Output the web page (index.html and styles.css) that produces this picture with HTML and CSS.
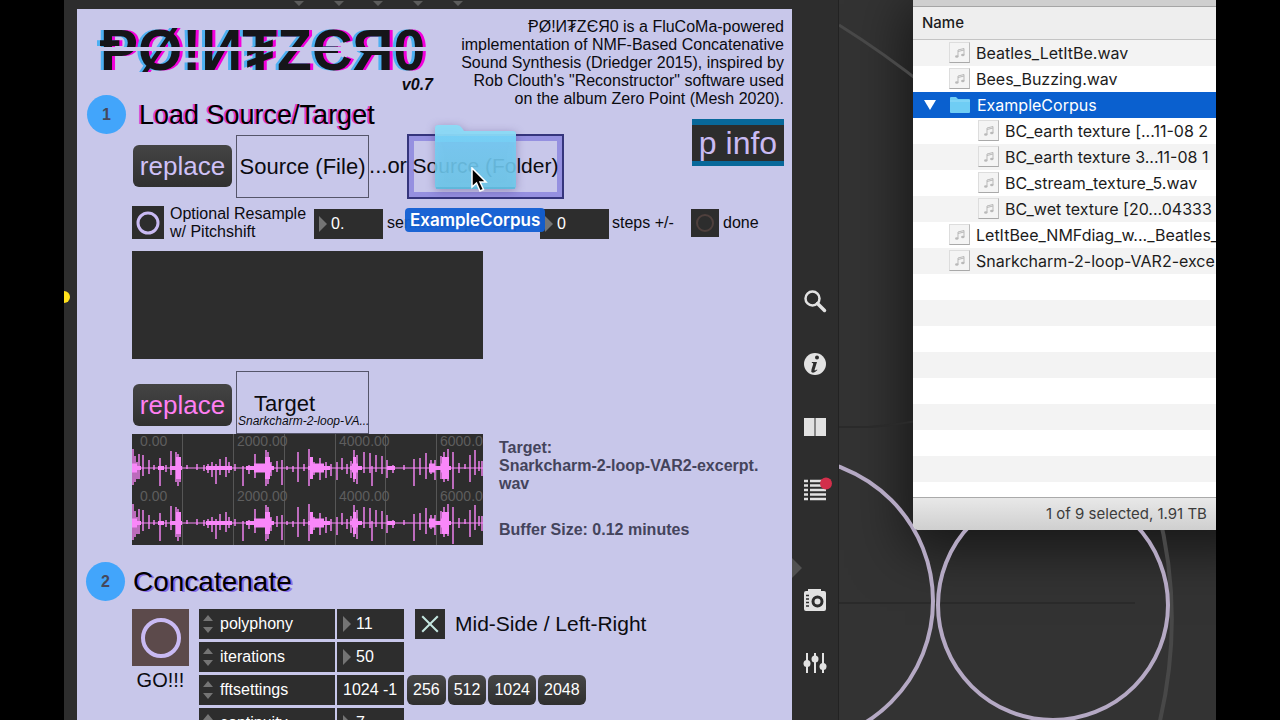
FILE: index.html
```html
<!DOCTYPE html>
<html lang="en">
<head>
<meta charset="utf-8">
<title>Point Zero</title>
<link rel="stylesheet" href="styles.css">
</head>
<body>
<div class="stage">
  <svg class="marks" width="400" height="9" viewBox="0 0 400 9" aria-hidden="true"><path d="M230 1h10l-5 5zM270 1h10l-5 5zM309 1h10l-5 5zM349 1h10l-5 5zM389 1h10l-5 5z" fill="#5c5c5c"/></svg>
  <aside class="gutter"><span class="gutter-dot"></span></aside>

  <main class="patch">
    <header class="intro">
      <div class="brand">
        <h1 class="logo">ⱣØ!И₮ZЄЯ0</h1>
        <p class="version">v0.7</p>
      </div>
      <p class="about">ⱣØ!И₮ZЄЯ0 is a FluCoMa-powered<br>implementation of NMF-Based Concatenative<br>Sound Synthesis (Driedger 2015), inspired by<br>Rob Clouth's "Reconstructor" software used<br>on the album Zero Point (Mesh 2020).</p>
    </header>

    <section class="load">
      <div class="load-main">
        <div class="heading heading-load"><span class="step">1</span><h2 class="title title-pink">Load Source/Target</h2></div>
        <div class="slots">
          <button class="replace">replace</button>
          <div class="drop">Source (File)</div>
          <span class="or">...or</span>
          <div class="drop drop-active">Source (Folder)
            <div class="drag">
              <svg class="drag-folder" width="86" height="72" viewBox="0 0 86 72" aria-hidden="true">
                <defs><linearGradient id="fold" x1="0" y1="0" x2="0" y2="1"><stop offset="0" stop-color="#74cdf5"/><stop offset="1" stop-color="#6ccaea"/></linearGradient></defs>
                <path d="M2 6q0-3 3-3h19q3 0 5 3l2 3h49q3 0 3 3v8H2z" fill="#8bdbf7" opacity=".95"/>
                <path d="M2 14h81v50q0 3-3 3H5q-3 0-3-3z" fill="url(#fold)" opacity=".88"/>
                <path d="M3 66h79" stroke="#4eabd0" stroke-width="1"/>
              </svg>
              <span class="drag-label">ExampleCorpus</span>
              <svg class="cursor" width="18" height="26" viewBox="0 0 18 26" aria-hidden="true"><path d="M1 1v19l4.500-4 3.500 8 3.500-1.500-3.500-7.500h6z" fill="#000" stroke="#fff" stroke-width="1.500"/></svg>
            </div>
          </div>
        </div>
      </div>
      <button class="info">p info</button>
    </section>

    <section class="resample">
      <button class="bang bang-m" aria-label="Resample"><svg width="26" height="26" viewBox="0 0 26 26"><circle cx="13" cy="13" r="10" fill="none" stroke="#c9baf3" stroke-width="3"/></svg></button>
      <span class="resample-label">Optional Resample<br>w/ Pitchshift</span>
      <label class="num"><svg width="8" height="16" viewBox="0 0 8 16"><path d="M0 0l8 8-8 8z" fill="#747474"/></svg><input class="num-in" aria-label="semitones" value="0."></label>
      <span class="semi">semitones per step</span>
      <label class="num num-steps"><svg width="8" height="16" viewBox="0 0 8 16"><path d="M0 0l8 8-8 8z" fill="#747474"/></svg><input class="num-in" aria-label="steps" value="0"></label>
      <span class="steps">steps +/-</span>
      <button class="bang bang-s" aria-label="done"><svg width="22" height="22" viewBox="0 0 22 22"><circle cx="11" cy="11" r="8" fill="none" stroke="#4f403d" stroke-width="2"/></svg></button>
      <span class="done">done</span>
    </section>

    <div class="buffer"></div>

    <section class="slots slots-target">
      <button class="replace replace-pink">replace</button>
      <div class="drop drop-target"><span class="target-name">Target</span><em class="target-file">Snarkcharm-2-loop-VA...</em></div>
    </section>

    <section class="target">
      <svg class="wave" width="351" height="111" viewBox="0 0 351 111" role="img" aria-label="Waveform">
        <rect width="351" height="111" fill="#2d2d2d"/>
        <path d="M50.500 0v111M101.500 0v111M152.500 0v111M203.500 0v111M253.500 0v111M304.500 0v111" stroke="#565656"/>
        <g class="ruler">
          <text x="8" y="12">0.00</text><text x="105" y="12">2000.00</text><text x="207" y="12">4000.00</text><text x="308" y="12">6000.00</text>
          <text x="8" y="67">0.00</text><text x="105" y="67">2000.00</text><text x="207" y="67">4000.00</text><text x="308" y="67">6000.00</text>
        </g>
        <g id="channel" fill="none" stroke="#f987f9">
          <path d="M0 34H351" stroke-width="1"/>
          <path d="M1 15v36M3 22v26M5 28v17M7 20v25M11 21v21M17 26v14M22 31v5M28 24v28M34 31v7M39 17v24M44 18v30M46 20v32M48 24v24M55 31v4M65 30v6M72 31v6M76 30v9M80 28v15M84 30v20M88 25v16M94 23v20M97 28v11M103 30v7M111 32v20M117 31v9M123 20v24M130 30v8M134 16v36M136 18v32M139 28v14M145 27v11M150 26v25M155 32v4M161 32v6M166 18v30M172 30v7M177 15v37M179 26v13M182 28v13M188 24v22M194 28v16M199 30v12M205 28v18M210 24v12M215 30v10M219 27v17M222 16v32M225 21v29M232 18v21M238 19v20M240 32v20M244 21v17M250 22v18M255 26v18M261 31v8M272 31v5M282 25v27M288 24v17M294 19v26M299 26v14M303 26v20M309 22v23M312 18v30M316 15v32M321 18v37M327 29v10M333 30v5M338 21v27M343 16v25M347 27v10M350 27v15" stroke-width="1.400"/>
          <path d="M0 34h9M26 34h6M38 34h12M74 34h26M114 34h28M176 34h22M218 34h12M255 34h8M297 34h22" stroke-width="4"/>
          <path d="M122 34h16M178 34h14M297 34h6M0 34h5M44 34h5M131 34h8M220 34h6M309 34h8" stroke-width="9"/>
          <path d="M44 34h5M133 34h5M178 34h3M221 34h3M310 34h7" stroke-width="22"/>
        </g>
        <use href="#channel" y="55"/>
      </svg>
      <div class="meta"><p class="meta-name">Target:<br>Snarkcharm-2-loop-VAR2-excerpt.<br>wav</p><p class="meta-size">Buffer Size: 0.12 minutes</p></div>
    </section>

    <div class="heading heading-concat"><span class="step">2</span><h2 class="title title-violet">Concatenate</h2></div>

    <section class="concat">
      <div class="go">
        <button class="bang bang-l" aria-label="Go"><svg width="44" height="44" viewBox="0 0 44 44"><circle cx="22" cy="22" r="18" fill="none" stroke="#c9baf3" stroke-width="4"/></svg></button>
        <span class="go-label">GO!!!</span>
      </div>
      <div class="params">
        <label class="param" for="p1"><svg width="10" height="18" viewBox="0 0 10 18"><path d="M0 6l5-6 5 6zM0 12h10l-5 6z" fill="#747474"/></svg>polyphony</label>
        <span class="value"><svg width="8" height="16" viewBox="0 0 8 16"><path d="M0 0l8 8-8 8z" fill="#747474"/></svg><input class="value-in" id="p1" value="11"></span>
        <label class="param" for="p2"><svg width="10" height="18" viewBox="0 0 10 18"><path d="M0 6l5-6 5 6zM0 12h10l-5 6z" fill="#747474"/></svg>iterations</label>
        <span class="value"><svg width="8" height="16" viewBox="0 0 8 16"><path d="M0 0l8 8-8 8z" fill="#747474"/></svg><input class="value-in" id="p2" value="50"></span>
        <label class="param" for="p3"><svg width="10" height="18" viewBox="0 0 10 18"><path d="M0 6l5-6 5 6zM0 12h10l-5 6z" fill="#747474"/></svg>fftsettings</label>
        <span class="value"><input class="value-in" id="p3" value="1024 -1"></span>
        <label class="param" for="p4"><svg width="10" height="18" viewBox="0 0 10 18"><path d="M0 6l5-6 5 6zM0 12h10l-5 6z" fill="#747474"/></svg>continuity</label>
        <span class="value"><svg width="8" height="16" viewBox="0 0 8 16"><path d="M0 0l8 8-8 8z" fill="#747474"/></svg><input class="value-in" id="p4" value="7"></span>
      </div>
      <div class="options">
        <label class="mid"><input class="tick" type="checkbox" checked>Mid-Side / Left-Right</label>
        <div class="sizes"><button class="size">256</button><button class="size">512</button><button class="size">1024</button><button class="size">2048</button></div>
      </div>
    </section>
  </main>

  <nav class="tools">
    <button class="tool" aria-label="Search"><svg width="24" height="24" viewBox="0 0 24 24"><circle cx="9.500" cy="9.500" r="7" fill="none" stroke="#e2e2e2" stroke-width="2.500"/><path d="M14.500 14.500l7 7" stroke="#e2e2e2" stroke-width="3.500" stroke-linecap="round"/></svg></button>
    <button class="tool" aria-label="Info"><svg width="24" height="24" viewBox="0 0 24 24"><circle cx="12" cy="12" r="11" fill="#e2e2e2"/><circle cx="14" cy="5.500" r="2" fill="#2d2d2d"/><path d="M9 10h5l-2.500 8q0 1 2.500-.5l.4.600q-3 3-5 2.500-1.700-.5-.9-3l1.700-5.500q.3-1.300-1.500-1z" fill="#2d2d2d"/></svg></button>
    <button class="tool" aria-label="Reference"><svg width="24" height="24" viewBox="0 0 24 24"><path d="M1 3h10.500v18H1zM12.500 3H23v18H12.500z" fill="#e2e2e2"/></svg></button>
    <button class="tool" aria-label="Console"><svg width="34" height="32" viewBox="-1 0 34 32"><path d="M5 7h4M11 7h16M5 11.500h4M11 11.500h16M5 16h4M11 16h16M5 20.500h4M11 20.500h16M5 25h4M11 25h16" stroke="#e2e2e2" stroke-width="2.500"/><circle cx="27" cy="9.500" r="6" fill="#d32f4b"/></svg></button>
    <button class="tool tool-camera" aria-label="Snapshots"><svg width="24" height="24" viewBox="0 0 24 24"><path d="M5 3V1h13v2h3q2 0 2 2v16q0 2-2 2H3q-2 0-2-2V5q0-2 2-2z" fill="#e2e2e2"/><path d="M3 7.500h3M3 11h3M3 14.500h3M3 18h3" stroke="#2d2d2d" stroke-width="1.500"/><circle cx="14.500" cy="13.500" r="4.500" fill="none" stroke="#2d2d2d" stroke-width="3"/></svg></button>
    <button class="tool" aria-label="Mixer"><svg width="24" height="24" viewBox="0 0 24 24"><path d="M4 2v20M12 2v20M20 2v20" stroke="#e2e2e2" stroke-width="2"/><circle cx="4" cy="12.500" r="3.500" fill="#e2e2e2"/><circle cx="12" cy="8" r="3.500" fill="#e2e2e2"/><circle cx="20" cy="15.500" r="3.500" fill="#e2e2e2"/></svg></button>
    <span class="notch"></span>
  </nav>

  <div class="canvas">
    <svg class="orbits" width="377" height="720" viewBox="0 0 377 720" aria-hidden="true">
      <path d="M0 427h30q30-2 80-12M0 603h296" fill="none" stroke="#2a2a2a" stroke-width="2"/>
      <path d="M310 480q40 120 10 245" fill="none" stroke="#484848" stroke-width="4"/>
      <path d="M0 25q45 28 90 64" fill="none" stroke="#484848" stroke-width="3"/>
      <circle cx="-49" cy="601" r="143" fill="none" stroke="#b5a9c4" stroke-width="4"/>
      <circle cx="214" cy="605" r="115" fill="none" stroke="#b5a9c4" stroke-width="4"/>
    </svg>
    <section class="finder">
      <div class="finder-bar"></div>
      <table class="files">
        <thead><tr><th>Name</th></tr></thead>
        <tbody>
          <tr><td><span class="file"><i class="doc"></i>Beatles_LetItBe.wav</span></td></tr>
          <tr><td><span class="file"><i class="doc"></i>Bees_Buzzing.wav</span></td></tr>
          <tr class="picked"><td><span class="file file-open"><svg width="14" height="12" viewBox="0 0 14 12"><path d="M1 1h12L7 11z" fill="#fff"/></svg><svg width="22" height="18" viewBox="0 0 22 18"><path d="M1 2q0-1 1-1h5l2 2h11q1 0 1 1v12q0 1-1 1H2q-1 0-1-1z" fill="#6fcdf4"/><path d="M1 5h20" stroke="#93dcf8"/></svg>ExampleCorpus</span></td></tr>
          <tr><td><span class="file file-in"><i class="doc"></i>BC_earth texture [...11-08 2</span></td></tr>
          <tr><td><span class="file file-in"><i class="doc"></i>BC_earth texture 3...11-08 1</span></td></tr>
          <tr><td><span class="file file-in"><i class="doc"></i>BC_stream_texture_5.wav</span></td></tr>
          <tr><td><span class="file file-in"><i class="doc"></i>BC_wet texture [20...04333</span></td></tr>
          <tr><td><span class="file"><i class="doc"></i>LetItBee_NMFdiag_w..._Beatles_</span></td></tr>
          <tr><td><span class="file"><i class="doc"></i>Snarkcharm-2-loop-VAR2-exce</span></td></tr>
        </tbody>
      </table>
      <div class="blank"></div>
      <footer class="status">1 of 9 selected, 1.91 TB</footer>
    </section>
  </div>
</div>
<script src="icons.js"></script>
</body>
</html>
```
FILE: icons.js
```js
// Puts the music-note glyph into every audio document icon.
document.querySelectorAll('.doc').forEach(function (el) {
  el.innerHTML = '<svg width="12" height="12" viewBox="0 0 12 12"><path d="M4 9.500V3l6-1.500V8M4 4.500L10 3" fill="none" stroke="#b9b9b9"/><ellipse cx="2.800" cy="9.500" rx="1.700" ry="1.300" fill="#b9b9b9"/><ellipse cx="8.800" cy="8" rx="1.700" ry="1.300" fill="#b9b9b9"/></svg>';
});
```
FILE: styles.css
```css
* { box-sizing: border-box; }
body { margin: 0; background: #000; font-family: "Liberation Sans", "DejaVu Sans", sans-serif; font-size: 16px; line-height: 18px; color: #0b0b10; }
h1, h2, p { margin: 0; }
button { font: inherit; border: 0; padding: 0; }
input { font: inherit; border: 0; padding: 0; background: none; min-width: 0; }
svg { display: block; flex: none; }

.stage { position: relative; display: grid; grid-template-columns: 13px minmax(0, 715px) 47px minmax(0, 1fr); height: 100vh; margin: 0 64px; background: #2d2d2d; overflow: hidden; }
.marks { position: absolute; left: 0; top: 0; }
.gutter { position: relative; }
.gutter-dot { position: absolute; left: -6px; top: 291px; width: 12px; height: 12px; border-radius: 50%; background: #ffe11c; }

.patch { margin-top: 9px; padding: 0 8px 0 55px; background: #c8c7ea; display: flex; flex-direction: column; min-height: 0; }
.patch > * { flex: none; }
.intro { display: flex; justify-content: space-between; height: 110px; margin-left: -34px; padding-top: 9px; }
.brand { position: relative; width: 335px; flex: none; }
.logo { height: 58px; padding-left: 2px; font-size: 57px; line-height: 65px; color: #151519; white-space: nowrap; text-shadow: -3px 0 #4db0f2, 3px 0 #f200dc; }
.brand::after { content: ""; position: absolute; left: 0; right: 0; top: 29px; height: 4px; background: #c8c7ea; }
.version { text-align: right; font-weight: bold; font-style: italic; }
.about { text-align: right; white-space: nowrap; }

.load { display: flex; justify-content: space-between; align-items: flex-start; height: 80px; }
.load-main { margin-top: -24px; }
.heading { display: flex; align-items: center; margin-left: -45px; height: 39px; }
.heading-load { gap: 13px; }
.heading-concat { gap: 8px; margin-top: 17px; margin-left: -46px; }
.step { width: 39px; height: 39px; border-radius: 50%; background: #42a5fb; color: #45485c; font-weight: bold; line-height: 39px; text-align: center; flex: none; }
.title { font-weight: normal; font-size: 27px; line-height: 32px; color: #000; }
.title-pink { text-shadow: -2px 0 #e03bd8; }
.title-violet { text-shadow: 2px 1px #8c6fe8; font-size: 28px; }
.slots { display: flex; align-items: center; height: 64px; padding-left: 1px; font-size: 22px; white-space: nowrap; }
.replace { width: 99px; height: 42px; margin-right: 4px; border-radius: 6px; background: linear-gradient(#444, #303030); color: #cfc1f7; font-size: 26px; line-height: 38px; flex: none; }
.replace-pink { color: #ff7ff2; }
.drop { width: 133px; height: 63px; border: 1px solid #55556a; line-height: 61px; text-align: center; flex: none; }
.or { width: 38px; text-align: center; }
.drop-active { position: relative; width: 157px; height: 65px; border: 2px solid #35357c; font-size: 21px; line-height: 59px; box-shadow: inset 0 0 0 5px #9590e0; }
.drag { position: absolute; left: 0; top: 0; }
.drag-folder { position: absolute; left: 24px; top: -14px; filter: drop-shadow(0 2px 5px rgba(60, 40, 110, .4)); }
.drag-label { position: absolute; left: -4px; top: 72px; height: 24px; padding: 0 5px; border-radius: 4px; background: rgba(18, 95, 211, .95); color: #fff; font: 600 17px/24px Inter, sans-serif; }
.cursor { position: absolute; left: 62px; top: 31px; }
.info { width: 92px; height: 47px; border: solid #08689a; border-width: 6px 0 5px; background: #2d2d2d; color: #c9baf3; font-size: 32px; line-height: 34px; white-space: nowrap; flex: none; }

.resample { display: flex; align-items: center; height: 33px; margin-top: 7px; white-space: nowrap; }
.bang { display: flex; align-items: center; justify-content: center; background: #2d2d2d; flex: none; }
.bang-m { width: 32px; height: 33px; }
.bang-s { width: 28px; height: 28px; }
.bang-l { width: 57px; height: 57px; background: #5c4a4b; }
.resample-label { width: 144px; margin-left: 6px; }
.num { display: flex; align-items: center; align-self: flex-end; gap: 4px; width: 69px; height: 30px; padding-left: 5px; background: #2d2d2d; color: #fff; flex: none; }
.num-in { width: 44px; color: #fff; }
.semi { width: 157px; padding-left: 4px; overflow: hidden; }
.steps { width: 82px; padding-left: 3px; }
.done { padding-left: 4px; }

.buffer { width: 351px; height: 108px; margin: 12px 0; background: #2d2d2d; }
.slots-target { height: 63px; }
.slots-target .replace { margin-top: 4px; }
.drop-target { display: flex; flex-direction: column; align-items: flex-start; justify-content: flex-end; padding: 0 1px 6px; }
.target-name { padding-left: 16px; line-height: 22px; }
.target-file { font-size: 12px; line-height: 12px; }

.target { display: flex; gap: 16px; }
.ruler { font-size: 14px; fill: #5e5e5e; }
.meta { padding-top: 5px; font-weight: bold; color: #44445c; }
.meta-size { margin-top: 28px; }

.concat { display: flex; align-items: flex-start; margin-top: 8px; white-space: nowrap; }
.go { width: 57px; margin-right: 10px; text-align: center; }
.go-label { display: block; font-size: 20px; line-height: 28px; }
.params { display: grid; grid-template-columns: 136px 67px; gap: 3px 2px; margin-right: 11px; }
.param, .value { display: flex; align-items: center; height: 30px; background: #2d2d2d; color: #fff; }
.param { gap: 7px; padding-left: 4px; }
.value { gap: 5px; padding-left: 6px; }
.value-in { width: 56px; color: #fff; }
.options { display: flex; flex-direction: column; gap: 36px; }
.mid { display: flex; align-items: center; gap: 10px; height: 30px; font-size: 21px; }
.tick { appearance: none; width: 30px; height: 30px; margin: 0; background: #2d2d2d; position: relative; flex: none; }
.tick:checked::before, .tick:checked::after { content: ""; position: absolute; left: 4px; top: 14px; width: 22px; height: 2px; background: #c4e6e0; transform: rotate(45deg); }
.tick:checked::after { transform: rotate(-45deg); }
.sizes { display: flex; gap: 2px; margin-left: -8px; }
.size { height: 30px; padding: 0 6px; border-radius: 6px; background: linear-gradient(#464646, #2f2f2f); color: #fff; }

.tools { position: relative; display: flex; flex-direction: column; align-items: center; gap: 39px; padding-top: 289px; border-right: 1px solid #222; }
.tool { display: flex; align-items: center; justify-content: center; width: 24px; height: 24px; background: none; flex: none; }
.tool-camera { margin-top: 47px; }
.notch { position: absolute; left: 0; top: 558px; border: solid transparent; border-width: 10px 0 10px 10px; border-left-color: #515151; }

.canvas { position: relative; background: #333; overflow: hidden; }
.orbits { position: absolute; left: 0; top: 0; }
.canvas::before { content: ""; position: absolute; left: 74px; right: -40px; top: 0; height: 530px; box-shadow: 0 12px 50px 8px rgba(0, 0, 0, .55); }
.finder { position: absolute; left: 74px; right: 0; top: 0; height: 530px; display: flex; flex-direction: column; background: #fff; border-radius: 0 0 0 6px; overflow: hidden; font-family: Inter, sans-serif; white-space: nowrap; color: #1c1c1c; }
.finder-bar { height: 7px; background: #cfcfcf; border-bottom: 1px solid #a5a5a5; flex: none; }
.files { border-collapse: collapse; width: 100%; table-layout: fixed; }
.files th { height: 32px; padding: 0 0 0 9px; background: #eee; border-bottom: 1px solid #c4c4c4; font-size: 15px; font-weight: 500; text-align: left; }
.files td { height: 26px; padding: 0; overflow: hidden; }
.files tbody tr:nth-child(odd) { background: #f3f3f3; }
.files tbody tr.picked { background: #0a60cf; color: #fff; }
.file { display: flex; align-items: center; gap: 6px; padding-left: 36px; height: 26px; }
.file-open { padding-left: 10px; gap: 12px; }
.file-open svg + svg { margin-right: -6px; }
.file-in { padding-left: 65px; }
.doc { display: flex; align-items: center; justify-content: center; width: 21px; height: 21px; border: 1px solid #ddd; border-bottom-color: #a9a9a9; border-right-color: #bbb; background: #f4f4f4; flex: none; }
.blank { flex: 1; background: repeating-linear-gradient(#fff 0 26px, #f3f3f3 26px 52px); }
.status { height: 33px; padding-left: 133px; border-top: 1px solid #aaa; background: linear-gradient(#e8e8e8, #cfcfcf); font-size: 15px; line-height: 31px; color: #3c3c3c; flex: none; }
```
